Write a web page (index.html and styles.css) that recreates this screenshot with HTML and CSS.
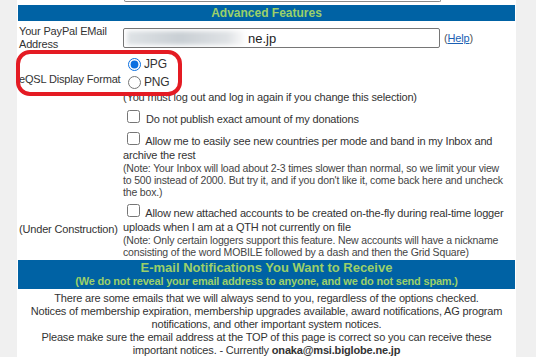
FILE: index.html
```html
<!doctype html>
<html lang="en-US">
    <head>
        <meta charset="utf-8">
        <title>Profile | eQSL</title>
        <link rel="stylesheet" href="styles.css">
    </head>
    <body>
        <div class="panel">
            <div class="stub"></div>
            <div class="bar bar-main">Advanced Features</div>
            <div class="form">
                <div class="label">Your PayPal EMail Address</div>
                <div class="field">
                    <div class="email"><span class="blur"></span><span class="domain">ne.jp</span></div>
                    <span class="help">(<a href="#">Help</a>)</span>
                </div>

                <div class="label">eQSL Display Format</div>
                <div class="field-stack radios">
                    <label class="choice"><input type="radio" name="fmt" checked> JPG</label>
                    <label class="choice"><input type="radio" name="fmt"> PNG</label>
                    <div class="hint">(You must log out and log in again if you change this selection)</div>
                </div>

                <div class="label"></div>
                <div class="field-stack">
                    <label class="check"><input type="checkbox"> Do not publish exact amount of my donations</label>
                </div>

                <div class="label"></div>
                <div class="field-stack">
                    <label class="check"><input type="checkbox"> Allow me to easily see new countries per mode and band in my Inbox and archive the rest</label>
                    <div class="note">(Note: Your Inbox will load about 2-3 times slower than normal, so we limit your view to 500 instead of 2000. But try it, and if you don't like it, come back here and uncheck the box.)</div>
                </div>

                <div class="label">(Under Construction)</div>
                <div class="field-stack">
                    <label class="check"><input type="checkbox"> Allow new attached accounts to be created on-the-fly during real-time logger uploads when I am at a QTH not currently on file</label>
                    <div class="note">(Note: Only certain loggers support this feature. New accounts will have a nickname consisting of the word MOBILE followed by a dash and then the Grid Square)</div>
                </div>
            </div>

            <div class="bar bar-notify">
                <div class="bar-title">E-mail Notifications You Want to Receive</div>
                <div class="bar-sub">(We do not reveal your email address to anyone, and we do not send spam.)</div>
            </div>
            <p class="notice">There are some emails that we will always send to you, regardless of the options checked.<br>
                Notices of membership expiration, membership upgrades available, award notifications, AG program notifications, and other important system notices.<br>
                Please make sure the email address at the TOP of this page is correct so you can receive these important notices. - Currently <b>onaka@msi.biglobe.ne.jp</b></p>

            <div class="ring"></div>
        </div>
    </body>
</html>
```

FILE: styles.css
```css
* {
    box-sizing: border-box;
}

body {
    margin: 0;
    background: #f0f0f0;
    font-family: "Liberation Sans", Arial, sans-serif;
    font-size: 11px;
    letter-spacing: -0.17px;
    line-height: 13px;
    color: #333;
}

.panel {
    position: relative;
    margin-left: 17px;
    width: 499px;
    min-height: 357px;
    padding: 0 1px;
    background: #fff;
}

.stub {
    margin-left: 106px;
    width: 317px;
    height: 2px;
    border: 1px solid #8a8a8a;
    border-top: 0;
    border-radius: 0 0 3px 3px;
}

.bar {
    background: #0062a4;
    color: #9bd06a;
    font-weight: bold;
    text-align: center;
    letter-spacing: 0;
}

.bar-main {
    margin-top: 3px;
    height: 16px;
    font-size: 12px;
    line-height: 16px;
}

.form {
    display: grid;
    grid-template-columns: 105px 1fr;
    row-gap: 3px;
    padding: 4px 9px 2px 0;
}

.label {
    align-self: center;
    padding-left: 1px;
}

.field {
    display: flex;
    align-items: center;
    gap: 4px;
}

.email {
    display: flex;
    align-items: center;
    width: 317px;
    height: 20px;
    border: 1px solid #767676;
    border-radius: 2px;
    overflow: hidden;
}

.blur {
    width: 118px;
    height: 14px;
    margin-left: 3px;
    background: linear-gradient(to right, #dfe3e6, #c9cfd4 45%, #dfe2e5 85%, #fbfbfb);
    filter: blur(2px);
}

.domain {
    margin-left: 3px;
    font-size: 13px;
    letter-spacing: 0;
    color: #222;
}

.help {
    color: #555;
}

.help a {
    color: #1a5fb4;
    text-decoration: underline;
}

.field-stack {
    display: flex;
    flex-direction: column;
}

.radios {
    padding-top: 1px;
}

.choice {
    display: flex;
    align-items: center;
    height: 18px;
    gap: 3px;
    font-size: 12px;
}

.choice input {
    margin: 0 0 0 5px;
    width: 13px;
    height: 13px;
    accent-color: #0a6fe0;
}

.check {
    line-height: 14px;
}

.check input {
    margin: 3px 3px 0 4px;
    width: 13px;
    height: 13px;
    vertical-align: baseline;
}

.note {
    font-size: 10.5px;
    line-height: 12px;
    color: #444;
}

.bar-notify {
    padding: 1px 0 1px;
}

.bar-title {
    font-size: 13px;
    line-height: 14px;
}

.bar-sub {
    font-size: 11px;
    letter-spacing: -0.2px;
    line-height: 13px;
}

.notice {
    margin: 3px 0 0;
    padding: 0 8px;
    text-align: center;
    line-height: 13px;
}

.ring {
    position: absolute;
    left: -1px;
    top: 50px;
    width: 166px;
    height: 46px;
    border: 4px solid #e41b23;
    border-radius: 14px;
}
```
